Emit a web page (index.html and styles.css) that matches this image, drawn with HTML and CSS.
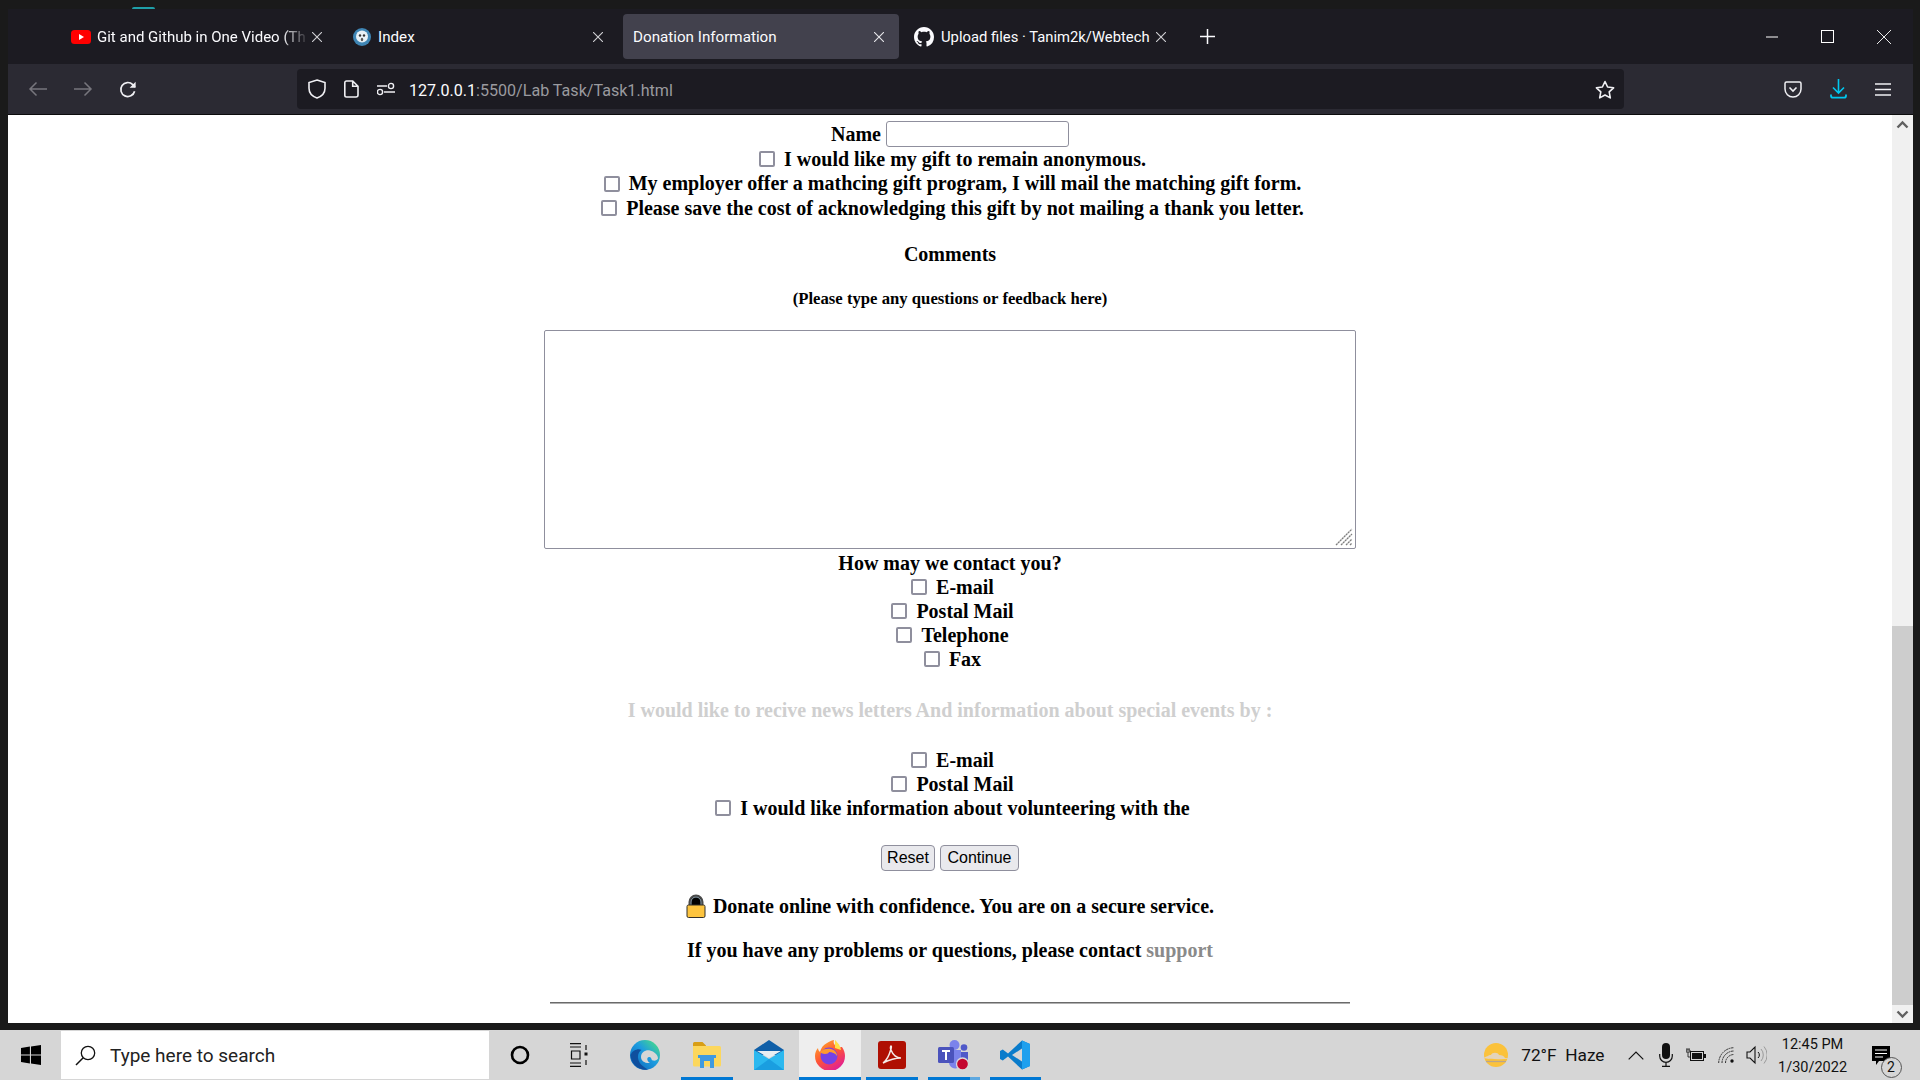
FILE: index.html
```html
<!DOCTYPE html>
<html lang="en">
<head>
    <meta charset="UTF-8">
    <title>Donation Information</title>
    <link rel="stylesheet" href="styles.css">
</head>
<body>
    <div class="desktop-top"><span class="teal-arc"></span></div>
    <div class="window">
        <!-- Tabs -->
        <div class="titlebar">
            <div class="tab tab-yt">
                <svg class="favicon" width="20" height="14" viewBox="0 0 20 14"><rect width="20" height="14" rx="3.5" fill="#f00"/><path d="M8 4l5 3-5 3z" fill="#fff"/></svg>
                <span class="tab-title fade">Git and Github in One Video (Th</span>
                <svg class="tab-x" width="10" height="10" viewBox="0 0 10 10"><path d="M0 0l10 10M10 0L0 10" stroke="#d0d0d4" stroke-width="1.1"/></svg>
            </div>
            <div class="tab tab-index">
                <svg class="favicon" width="18" height="18" viewBox="0 0 18 18"><circle cx="9" cy="9" r="9" fill="#3f86b5"/><circle cx="9" cy="8.5" r="6" fill="#e8f1f6"/><circle cx="7" cy="7.5" r="1.2" fill="#333"/><circle cx="11" cy="7.5" r="1.2" fill="#333"/><ellipse cx="9" cy="11.5" rx="1.2" ry="1.8" fill="#555"/></svg>
                <span class="tab-title">Index</span>
                <svg class="tab-x" width="10" height="10" viewBox="0 0 10 10"><path d="M0 0l10 10M10 0L0 10" stroke="#d0d0d4" stroke-width="1.1"/></svg>
            </div>
            <div class="tab tab-active">
                <span class="tab-title">Donation Information</span>
                <svg class="tab-x" width="10" height="10" viewBox="0 0 10 10"><path d="M0 0l10 10M10 0L0 10" stroke="#e6e6ea" stroke-width="1.1"/></svg>
            </div>
            <div class="tab tab-gh">
                <svg class="favicon" width="20" height="20" viewBox="0 0 16 16"><path fill="#fbfbfe" d="M8 0C3.58 0 0 3.58 0 8c0 3.54 2.29 6.53 5.47 7.59.4.07.55-.17.55-.38 0-.19-.01-.82-.01-1.49-2.01.37-2.53-.49-2.69-.94-.09-.23-.48-.94-.82-1.13-.28-.15-.68-.52-.01-.53.63-.01 1.08.58 1.23.82.72 1.21 1.87.87 2.33.66.07-.52.28-.87.51-1.07-1.78-.2-3.64-.89-3.64-3.95 0-.87.31-1.59.82-2.15-.08-.2-.36-1.02.08-2.12 0 0 .67-.21 2.2.82.64-.18 1.32-.27 2-.27s1.36.09 2 .27c1.53-1.04 2.2-.82 2.2-.82.44 1.1.16 1.92.08 2.12.51.56.82 1.27.82 2.15 0 3.07-1.87 3.75-3.65 3.95.29.25.54.73.54 1.48 0 1.07-.01 1.93-.01 2.2 0 .21.15.46.55.38A8.01 8.01 0 0016 8c0-4.42-3.58-8-8-8z"/></svg>
                <span class="tab-title">Upload files · Tanim2k/Webtech</span>
                <svg class="tab-x" width="10" height="10" viewBox="0 0 10 10"><path d="M0 0l10 10M10 0L0 10" stroke="#d0d0d4" stroke-width="1.1"/></svg>
            </div>
            <svg class="new-tab" width="15" height="15" viewBox="0 0 15 15"><path d="M7.5 0v15M0 7.5h15" stroke="#fbfbfe" stroke-width="1.5"/></svg>
            <div class="win-controls">
                <svg width="12" height="12" viewBox="0 0 12 12"><path d="M0 6h12" stroke="#fff" stroke-width="1"/></svg>
                <svg width="13" height="13" viewBox="0 0 13 13"><rect x=".5" y=".5" width="12" height="12" fill="none" stroke="#fff"/></svg>
                <svg width="14" height="14" viewBox="0 0 14 14"><path d="M0 0l14 14M14 0L0 14" stroke="#e8e8e8" stroke-width="1"/></svg>
            </div>
        </div>

        <!-- Toolbar -->
        <div class="toolbar">
            <div class="nav-btns">
                <svg width="20" height="16" viewBox="0 0 20 16"><path d="M19 8H2M8.5 1.500L2 8l6.500 6.500" fill="none" stroke="#77767d" stroke-width="1.5"/></svg>
                <svg width="20" height="16" viewBox="0 0 20 16"><path d="M1 8h17M11.500 1.500L18 8l-6.500 6.500" fill="none" stroke="#77767d" stroke-width="1.5"/></svg>
                <svg class="reload" width="18" height="18" viewBox="0 0 18 18"><path d="M15.600 10.200A7 7 0 1 1 13.800 3.600L16 6" fill="none" stroke="#f0f0f4" stroke-width="1.7"/><path d="M16.600 .8v6h-6z" fill="#f0f0f4"/></svg>
            </div>
            <div class="urlbar">
                <svg width="18" height="20" viewBox="0 0 18 20"><path d="M9 1l8 2.600v5.600c0 5-3.600 8.200-8 9.800-4.400-1.600-8-4.800-8-9.800V3.600z" fill="none" stroke="#f0f0f4" stroke-width="1.6"/></svg>
                <svg width="15" height="18" viewBox="0 0 15 18"><path d="M2.500 1h6.200L14 6.300V15a2 2 0 0 1-2 2H2.500a1.700 1.700 0 0 1-1.700-1.700V2.700A1.700 1.700 0 0 1 2.500 1zM8.700 1v5.300H14" fill="none" stroke="#f0f0f4" stroke-width="1.6"/></svg>
                <svg class="perm-icon" width="18" height="14" viewBox="0 0 18 14"><path d="M0 4h10M7 10h11" stroke="#f0f0f4" stroke-width="1.5"/><circle cx="14" cy="4" r="2.600" fill="none" stroke="#f0f0f4" stroke-width="1.4"/><circle cx="3" cy="10" r="2.600" fill="none" stroke="#f0f0f4" stroke-width="1.4"/></svg>
                <span class="url"><b>127.0.0.1</b>:5500/Lab Task/Task1.html</span>
                <svg class="star" width="20" height="19" viewBox="0 0 20 19"><path d="M10 1.500l2.600 5.500 6 .8-4.400 4.100 1.100 6L10 15l-5.300 2.900 1.100-6L1.400 7.800l6-.8z" fill="none" stroke="#f0f0f4" stroke-width="1.6" stroke-linejoin="round"/></svg>
            </div>
            <div class="tool-right">
                <svg width="18" height="17" viewBox="0 0 18 17"><path d="M2.500 1h13A1.500 1.500 0 0 1 17 2.500V8A8 8 0 0 1 1 8V2.500A1.500 1.500 0 0 1 2.500 1z" fill="none" stroke="#f0f0f4" stroke-width="1.5"/><path d="M5.500 6.500L9 10l3.500-3.500" fill="none" stroke="#f0f0f4" stroke-width="1.6"/></svg>
                <svg width="17" height="20" viewBox="0 0 17 20"><path d="M8.500 0v14M3 8.500l5.500 5.500L14 8.500" fill="none" stroke="#00c8ef" stroke-width="1.6"/><path d="M1 15.500v1.200a2 2 0 0 0 2 2h11a2 2 0 0 0 2-2v-1.200" fill="none" stroke="#00c8ef" stroke-width="1.8"/></svg>
                <svg width="16" height="13" viewBox="0 0 16 13"><path d="M0 1h16M0 6.500h16M0 12h16" stroke="#f0f0f4" stroke-width="1.6"/></svg>
            </div>
        </div>

        <!-- Page -->
        <div class="viewport">
            <div class="page">
                <form class="donation">
                    <div class="row name-row">
                        <label for="donor">Name</label>
                        <input type="text" id="donor" class="name-input">
                    </div>
                    <div class="row row-wide"><input type="checkbox" class="check"><span>I would like my gift to remain anonymous.</span></div>
                    <div class="row row-wide"><input type="checkbox" class="check"><span>My employer offer a mathcing gift program, I will mail the matching gift form.</span></div>
                    <div class="row row-wide"><input type="checkbox" class="check"><span>Please save the cost of acknowledging this gift by not mailing a thank you letter.</span></div>

                    <h4 class="comments-title">Comments</h4>
                    <h5 class="comments-hint">(Please type any questions or feedback here)</h5>
                    <div class="comment-box">
                        <textarea class="comment-area"></textarea>
                        <svg class="grip" width="18" height="18" viewBox="0 0 18 18"><path d="M1 17L17 1M6 17L17 6M11 17l6-6M15 17l2-2" stroke="#7d7d7d" stroke-width="1.3" stroke-dasharray="2.2 .6"/></svg>
                    </div>

                    <div class="row contact-title">How may we contact you?</div>
                    <div class="row"><input type="checkbox" class="check"><span>E-mail</span></div>
                    <div class="row"><input type="checkbox" class="check"><span>Postal Mail</span></div>
                    <div class="row"><input type="checkbox" class="check"><span>Telephone</span></div>
                    <div class="row"><input type="checkbox" class="check"><span>Fax</span></div>

                    <div class="row news-title">I would like to recive news letters And information about special events by :</div>
                    <div class="row news-first"><input type="checkbox" class="check"><span>E-mail</span></div>
                    <div class="row"><input type="checkbox" class="check"><span>Postal Mail</span></div>
                    <div class="row"><input type="checkbox" class="check"><span>I would like information about volunteering with the</span></div>

                    <div class="buttons">
                        <button type="reset" class="btn btn-reset">Reset</button>
                        <button type="button" class="btn btn-continue">Continue</button>
                    </div>

                    <div class="row secure">
                        <svg class="lock" width="20" height="24" viewBox="0 0 20 24"><path d="M3.500 14V8a6.500 6.500 0 0 1 13 0v6z" fill="#000" stroke="#4a4a4a" stroke-width="2"/><path d="M5 13V8a5 5 0 0 1 10 0v5" fill="none" stroke="#b9d3e6" stroke-width=".8"/><rect x="1" y="11" width="18" height="12.500" rx="1.500" fill="#fdc43f" stroke="#33302a" stroke-width="1"/></svg>
                        <span>Donate online with confidence. You are on a secure service.</span>
                    </div>
                    <div class="row help">If you have any problems or questions, please contact <a href="#" class="support">support</a></div>
                    <hr class="divider">
                </form>
            </div>
            <div class="scrollbar">
                <div class="scroll-btn"><svg width="13" height="9" viewBox="0 0 13 9"><path d="M1.500 7.500l5-5 5 5" fill="none" stroke="#606060" stroke-width="2.4"/></svg></div>
                <div class="scroll-track"><div class="scroll-thumb"></div></div>
                <div class="scroll-btn"><svg width="13" height="9" viewBox="0 0 13 9"><path d="M1.500 1.500l5 5 5-5" fill="none" stroke="#606060" stroke-width="2.4"/></svg></div>
            </div>
        </div>
    </div>
    <div class="desktop-strip"></div>

    <!-- Taskbar -->
    <div class="taskbar">
        <div class="start">
            <svg width="20" height="20" viewBox="0 0 20 20"><path fill="#000" d="M0 2.900l8.900-1.300v7.900H0zM10 1.400L20 0v9.500H10zM0 10.600h8.900v7.800L0 17.100zM10 10.600h10V20l-10-1.400z"/></svg>
        </div>
        <div class="search">
            <svg width="21" height="21" viewBox="0 0 21 21"><circle cx="13" cy="8" r="6.700" fill="none" stroke="#111" stroke-width="1.3"/><path d="M8.200 12.800L1 20" stroke="#111" stroke-width="1.5"/></svg>
            <span>Type here to search</span>
        </div>
        <div class="slots">
            <div class="slot"><svg class="cortana" width="20" height="20" viewBox="0 0 20 20"><circle cx="10" cy="10" r="8" fill="none" stroke="#000" stroke-width="2.6"/></svg></div>
            <div class="slot"><svg class="taskview" width="20" height="24" viewBox="0 0 20 24"><path d="M0 .7h11M0 4h11M0 20h11M0 23.300h11M1.500 8h8.500v8H1.500zM16 2v5M16 17v5" fill="none" stroke="#111" stroke-width="1.2"/><rect x="14.500" y="9.500" width="3" height="3" fill="#111"/></svg></div>
            <div class="slot">
                <svg width="30" height="30" viewBox="0 0 30 30"><defs><linearGradient id="edgeA" x1="0" y1="1" x2="1" y2="0"><stop offset="0" stop-color="#0a5fb4"/><stop offset=".55" stop-color="#1d9ce0"/><stop offset=".85" stop-color="#3fcf9a"/><stop offset="1" stop-color="#7fe06a"/></linearGradient></defs><circle cx="15" cy="15" r="15" fill="url(#edgeA)"/><path d="M11 17c0-5 5-7.500 9-6.500 4 1 8 4 8 8-.5 1.500-3 2.500-5 2-2 0-1-3-3.500-3.500-3-.5-3 4 .5 6-5 .5-9-2-9-6z" fill="#d6d6d6"/><path d="M.5 15c2-5 8-7 11-5-2 1-4 4-3.500 8 .5 5 5 9 10 11.500C9 31 1 24 .5 15z" fill="#0f4f9e"/></svg>
            </div>
            <div class="slot slot-open"><svg width="28" height="26" viewBox="0 0 28 26"><path d="M0 1.500A1.500 1.500 0 0 1 1.500 0h8L13 3.500v2H0z" fill="#d89e16"/><path d="M0 4h26.500A1.500 1.500 0 0 1 28 5.500V23a1.500 1.500 0 0 1-1.500 1.500H1.500A1.500 1.500 0 0 1 0 23z" fill="#fcd75d"/><path d="M5 13h18v3h-2v10h-4v-7h-6v7H7V16H5z" fill="#3f9ae0"/></svg></div>
            <div class="slot"><svg width="30" height="30" viewBox="0 0 30 30"><path d="M15 0L30 10v5H0v-5z" fill="#0f5fa8"/><path d="M3 11h24L15 18z" fill="#e8eef2"/><path d="M0 10l15 9 15-9v20H0z" fill="#2bb8ef"/><path d="M0 30l15-11 15 11z" fill="#1a9ee0"/></svg></div>
            <div class="slot slot-open slot-active"><svg width="30" height="30" viewBox="0 0 30 30"><defs><linearGradient id="foxA" x1="0" y1="0" x2=".6" y2="1"><stop offset="0" stop-color="#ffb72a"/><stop offset=".55" stop-color="#ff5634"/><stop offset="1" stop-color="#e3218f"/></linearGradient></defs><path d="M27 7c2 3 3 6 3 9a15 15 0 0 1-30 0c0-3 1-6 3-8 0 2 1 3 2 4 1-4 3-7 7-9 3-2 6-3 7-3-1 3 0 5 3 7 2 1 4 0 5 0z" fill="url(#foxA)"/><path d="M20 0c3 3 5 5 6 10l-6-2z" fill="#ffe14a"/><circle cx="14" cy="16" r="8.500" fill="#7542e5"/><path d="M5 12c3-3 7-4 11-3 4 1 6 4 6 7-2-3-5-4-8-4 0 1-2 2-4 2-2 0-4-1-5-2z" fill="#ff9a2f"/></svg></div>
            <div class="slot slot-open"><svg width="28" height="28" viewBox="0 0 28 28"><rect width="28" height="28" rx="3" fill="#af0f02"/><path d="M5 22c3-2 6-7 8-14 .5-2 .5-3 0-3s-1 2 0 4c2 5 5 8 10 8-6 0-12 2-18 5z" fill="none" stroke="#f5e9e6" stroke-width="1.5"/></svg></div>
            <div class="slot slot-open slot-partial"><svg width="32" height="32" viewBox="0 0 32 32"><circle cx="16.500" cy="6" r="5" fill="#7b83eb"/><circle cx="26" cy="8.500" r="3.300" fill="#5059c9"/><path d="M22 13h8v8a4 4 0 0 1-4 4h-4z" fill="#5059c9"/><path d="M9 11h14v12a6 6 0 0 1-12 1z" fill="#7b83eb"/><rect x="0" y="8" width="16" height="16" rx="1.500" fill="#4b53bc"/><path d="M4 12h8M8 12v9" stroke="#fff" stroke-width="2"/><circle cx="24.500" cy="25" r="6" fill="#c4062f" stroke="#d9d9d9" stroke-width="1.3"/></svg></div>
            <div class="slot slot-open"><svg width="30" height="30" viewBox="0 0 30 30"><path d="M22 .5L8 13.500 2.800 9.500 0 11v8l2.800 1.500L8 16.500 22 29.500l8-3.500V4z" fill="#0a7ccb"/><path d="M22 .5l8 3.500v22l-8 3.500z" fill="#1fa0ee"/><path d="M22 8.500L12 15l10 6.500z" fill="#d6d6d6"/></svg></div>
        </div>
        <div class="tray">
            <svg class="sun" width="28" height="24" viewBox="0 0 28 24"><circle cx="14" cy="12" r="12" fill="#fbc23b"/><path d="M1 15c4-1 5-3 8-3 1-3 7-3 8 0 3 0 5 1 6 3 2 0 3 0 5 .5-7 1-20 1-27-.5z" fill="#e3d3bb"/><path d="M4 18.500h20" stroke="#b9a58c" stroke-width="1.3"/></svg>
            <span class="weather">72°F&nbsp; Haze</span>
            <svg class="chev" width="16" height="9" viewBox="0 0 16 9"><path d="M.7 8.300L8 1l7.300 7.300" fill="none" stroke="#111" stroke-width="1.2"/></svg>
            <svg class="mic" width="14" height="24" viewBox="0 0 14 24"><rect x="3" y="0" width="8" height="16" rx="4" fill="#111"/><path d="M.7 11v2a6.300 6.300 0 0 0 12.600 0v-2M7 19v4M3 23.300h8" fill="none" stroke="#111" stroke-width="1.2"/></svg>
            <svg class="batt" width="20" height="14" viewBox="0 0 20 14"><rect x="4.500" y="3.500" width="13" height="9" fill="none" stroke="#111"/><rect x="6" y="5" width="10" height="6" fill="#111"/><rect x="18" y="6" width="2" height="4" fill="#111"/><path d="M1 0v2M3 0v2M0 2h4v2H0zM2 4v5h2.500" stroke="#111" stroke-width=".8" fill="none"/></svg>
            <svg class="wifi" width="17" height="17" viewBox="0 0 17 17"><path d="M.7 16A15.500 15.500 0 0 1 16 .7M4 16A12 12 0 0 1 16 4M7.500 16A8.500 8.500 0 0 1 16 7.500" fill="none" stroke="#333" stroke-width="1" stroke-dasharray="2 .6"/><circle cx="14" cy="14" r="1.700" fill="#111"/></svg>
            <svg class="speaker" width="21" height="20" viewBox="0 0 21 20"><path d="M1 7h3l5-5v16l-5-5H1z" fill="none" stroke="#111" stroke-width="1.1"/><path d="M12 7a4 4 0 0 1 0 6" fill="none" stroke="#111"/><path d="M15 4a9 9 0 0 1 0 12M18 1.500a13 13 0 0 1 0 17" fill="none" stroke="#9a9a9a"/></svg>
            <div class="clock"><span>12:45 PM</span><span>1/30/2022</span></div>
            <div class="notif">
                <svg width="18" height="19" viewBox="0 0 18 19"><path fill="#000" d="M0 0h18v15H7l-3 4v-4H0z"/><path d="M3 4h12M3 7.500h12M3 11h8" stroke="#fff" stroke-width="1"/></svg>
                <span class="notif-count">2</span>
            </div>
        </div>
    </div>
</body>
</html>
```

FILE: styles.css
```css
html, body {
    margin: 0;
    padding: 0;
    height: 100%;
    overflow: hidden;
}
body {
    display: flex;
    flex-direction: column;
    background-color: #1a1a1a;
    font-family: "Liberation Serif", serif;
}
svg {
    display: block;
    flex-shrink: 0;
}

/* Desktop edges */
.desktop-top {
    height: 9px;
    position: relative;
}
.teal-arc {
    position: absolute;
    left: 132px;
    top: 7px;
    width: 23px;
    height: 2px;
    border-radius: 12px 12px 0 0;
    background-color: #1f9fa8;
}
.desktop-strip {
    height: 7px;
}

/* Browser window */
.window {
    margin: 0 7px 0 8px;
    height: 1014px;
    display: flex;
    flex-direction: column;
}
.titlebar {
    height: 55px;
    background-color: #1c1b22;
    display: flex;
    align-items: center;
    font-family: Roboto, sans-serif;
    font-size: 15.2px;
    color: #fbfbfe;
}
.tab {
    height: 45px;
    display: flex;
    align-items: center;
    box-sizing: border-box;
    flex-shrink: 0;
}
.tab-title {
    white-space: nowrap;
    overflow: hidden;
}
.tab-x {
    margin-left: auto;
}
.tab-yt {
    width: 314px;
    padding-left: 63px;
}
.tab-yt .tab-title {
    width: 212px;
    margin-left: 6px;
    font-size: 15px;
}
.fade {
    -webkit-mask-image: linear-gradient(to right, #000 185px, transparent 212px);
    mask-image: linear-gradient(to right, #000 185px, transparent 212px);
}
.tab-index {
    width: 281px;
    padding-left: 31px;
}
.tab-index .tab-title {
    margin-left: 7px;
}
.tab-active {
    width: 276px;
    margin-left: 20px;
    padding: 0 15px 0 10px;
    background-color: #42414d;
    border-radius: 4px;
}
.tab-gh {
    width: 267px;
    padding-left: 15px;
}
.tab-gh .tab-title {
    margin-left: 7px;
    font-size: 14.8px;
}
.new-tab {
    margin-left: 34px;
}
.win-controls {
    margin-left: auto;
    display: flex;
    align-items: center;
    gap: 43px;
    padding-right: 22px;
}

.toolbar {
    height: 50px;
    background-color: #2b2a33;
    display: flex;
    align-items: center;
    border-bottom: 1px solid #0c0c0d;
}
.nav-btns {
    width: 289px;
    display: flex;
    align-items: center;
    gap: 25px;
    padding-left: 20px;
    box-sizing: border-box;
}
.reload {
    margin: 2px 0 0 1px;
}
.urlbar {
    width: 1327px;
    height: 40px;
    background-color: #1c1b22;
    border-radius: 4px;
    display: flex;
    align-items: center;
    gap: 18px;
    padding: 0 9px 0 11px;
    box-sizing: border-box;
}
.perm-icon {
    margin-right: -4px;
}
.url {
    font-family: Roboto, sans-serif;
    font-size: 16.1px;
    padding-top: 2px;
    color: #9a9a9f;
    white-space: nowrap;
}
.url b {
    font-weight: normal;
    color: #fbfbfe;
}
.star {
    margin-left: auto;
}
.tool-right {
    flex: 1;
    display: flex;
    align-items: center;
    gap: 28px;
    padding-left: 160px;
    box-sizing: border-box;
}

/* Page area */
.viewport {
    height: 908px;
    display: flex;
    background-color: #fff;
    overflow: hidden;
}
.page {
    flex: 1;
    overflow: hidden;
}
.scrollbar {
    width: 21px;
    display: flex;
    flex-direction: column;
    background-color: #f0f0f0;
}
.scroll-btn {
    height: 18px;
    display: flex;
    align-items: center;
    justify-content: center;
}
.scroll-track {
    flex: 1;
    display: flex;
    flex-direction: column;
    justify-content: flex-end;
}
.scroll-thumb {
    height: 379px;
    background-color: #cdcdcd;
}

/* Form */
.donation {
    text-align: center;
    font-size: 20px;
    font-weight: bold;
    color: #000;
}
.row {
    height: 24px;
    line-height: 24px;
    display: flex;
    justify-content: center;
    align-items: center;
    white-space: nowrap;
}
.row-wide {
    height: 24.4px;
    line-height: 24.4px;
}
.name-row {
    height: 26px;
    margin: 6px 0 0;
    gap: 5px;
}
.name-input {
    width: 183px;
    height: 26px;
    box-sizing: border-box;
    border: 1px solid #8f8f9d;
    border-radius: 3px;
    background-color: #fff;
    margin: 0;
    padding: 0;
}
.check {
    appearance: none;
    -webkit-appearance: none;
    width: 16px;
    height: 16px;
    box-sizing: border-box;
    border: 2px solid #8f8f9d;
    border-radius: 2px;
    background-color: #fff;
    margin: 0 9px 0 5px;
}
.comments-title {
    font-size: 20px;
    line-height: 24px;
    margin: 22px 0 0;
}
.comments-hint {
    font-size: 16.7px;
    line-height: 20px;
    margin: 23px 0 0;
}
.comment-box {
    width: 812px;
    height: 219px;
    margin: 21px auto 0;
    position: relative;
}
.comment-area {
    display: block;
    width: 100%;
    height: 100%;
    box-sizing: border-box;
    border: 1px solid #8f8f9d;
    border-radius: 2px;
    margin: 0;
    resize: none;
    outline: none;
    background-color: #fff;
}
.grip {
    position: absolute;
    right: 3px;
    bottom: 3px;
}
.contact-title {
    margin-top: 2px;
}
.news-title {
    margin-top: 27px;
    color: #cfcfcf;
}
.news-first {
    margin-top: 26px;
}
.buttons {
    margin-top: 25px;
    display: flex;
    justify-content: center;
    gap: 5px;
}
.btn {
    height: 26px;
    box-sizing: border-box;
    padding: 0;
    margin: 0;
    border: 1.5px solid #8f8f9d;
    border-radius: 4px;
    background-color: #e9e9ed;
    color: #000;
    font-family: "Liberation Sans", sans-serif;
    font-size: 16px;
}
.btn-reset {
    width: 54px;
}
.btn-continue {
    width: 79px;
}
.secure {
    margin-top: 23px;
    gap: 7px;
}
.help {
    margin-top: 20px;
    white-space: pre-wrap;
}
.support {
    color: #8a8a8a;
    text-decoration: none;
}
.divider {
    width: 800px;
    height: 2px;
    margin: 40px auto 0;
    border: 0;
    border-top: 1px solid #6a6a6a;
    border-bottom: 1px solid #b0b0b0;
    box-sizing: border-box;
}

/* Taskbar */
.taskbar {
    height: 50px;
    background-color: #d6d6d6;
    display: flex;
    align-items: center;
    font-family: Roboto, sans-serif;
    color: #111;
}
.start {
    width: 61px;
    display: flex;
    justify-content: center;
}
.search {
    width: 428px;
    height: 48px;
    background-color: #fff;
    display: flex;
    align-items: center;
    gap: 14px;
    padding-left: 14px;
    box-sizing: border-box;
    font-size: 19px;
    color: #222;
}
.slots {
    display: flex;
    height: 50px;
    margin-left: 2px;
}
.slot {
    width: 61.7px;
    height: 50px;
    display: flex;
    align-items: center;
    justify-content: center;
    position: relative;
}
.cortana {
    margin-right: 4px;
}
.taskview {
    margin-right: 8px;
}
.slot-active {
    background-color: #eeeeee;
}
.slot-open::after {
    content: "";
    position: absolute;
    left: 5px;
    right: 5px;
    bottom: 0;
    height: 3px;
    background-color: #0078d4;
}
.slot-active::after {
    left: 0;
    right: 0;
}
.slot-partial::after {
    background: linear-gradient(to right, #0078d4 80%, #5ea8e0 80%);
}
.tray {
    flex: 1;
    display: flex;
    align-items: center;
    padding-left: 436px;
    box-sizing: border-box;
}
.weather {
    margin-left: 11px;
    font-size: 17.3px;
    white-space: nowrap;
}
.chev {
    margin-left: 23px;
}
.mic {
    margin-left: 15px;
}
.batt {
    margin-left: 13px;
}
.wifi {
    margin-left: 12px;
}
.speaker {
    margin-left: 11px;
}
.clock {
    width: 92px;
    display: flex;
    flex-direction: column;
    align-items: center;
    gap: 5px;
    padding-top: 2px;
    font-size: 14.5px;
    line-height: 18px;
}
.notif {
    position: relative;
    margin-left: 13px;
}
.notif-count {
    position: absolute;
    left: 9px;
    top: 11px;
    width: 19px;
    height: 19px;
    border-radius: 50%;
    border: 1px solid #555;
    background-color: #d6d6d6;
    font-size: 14px;
    line-height: 19px;
    text-align: center;
}
```
